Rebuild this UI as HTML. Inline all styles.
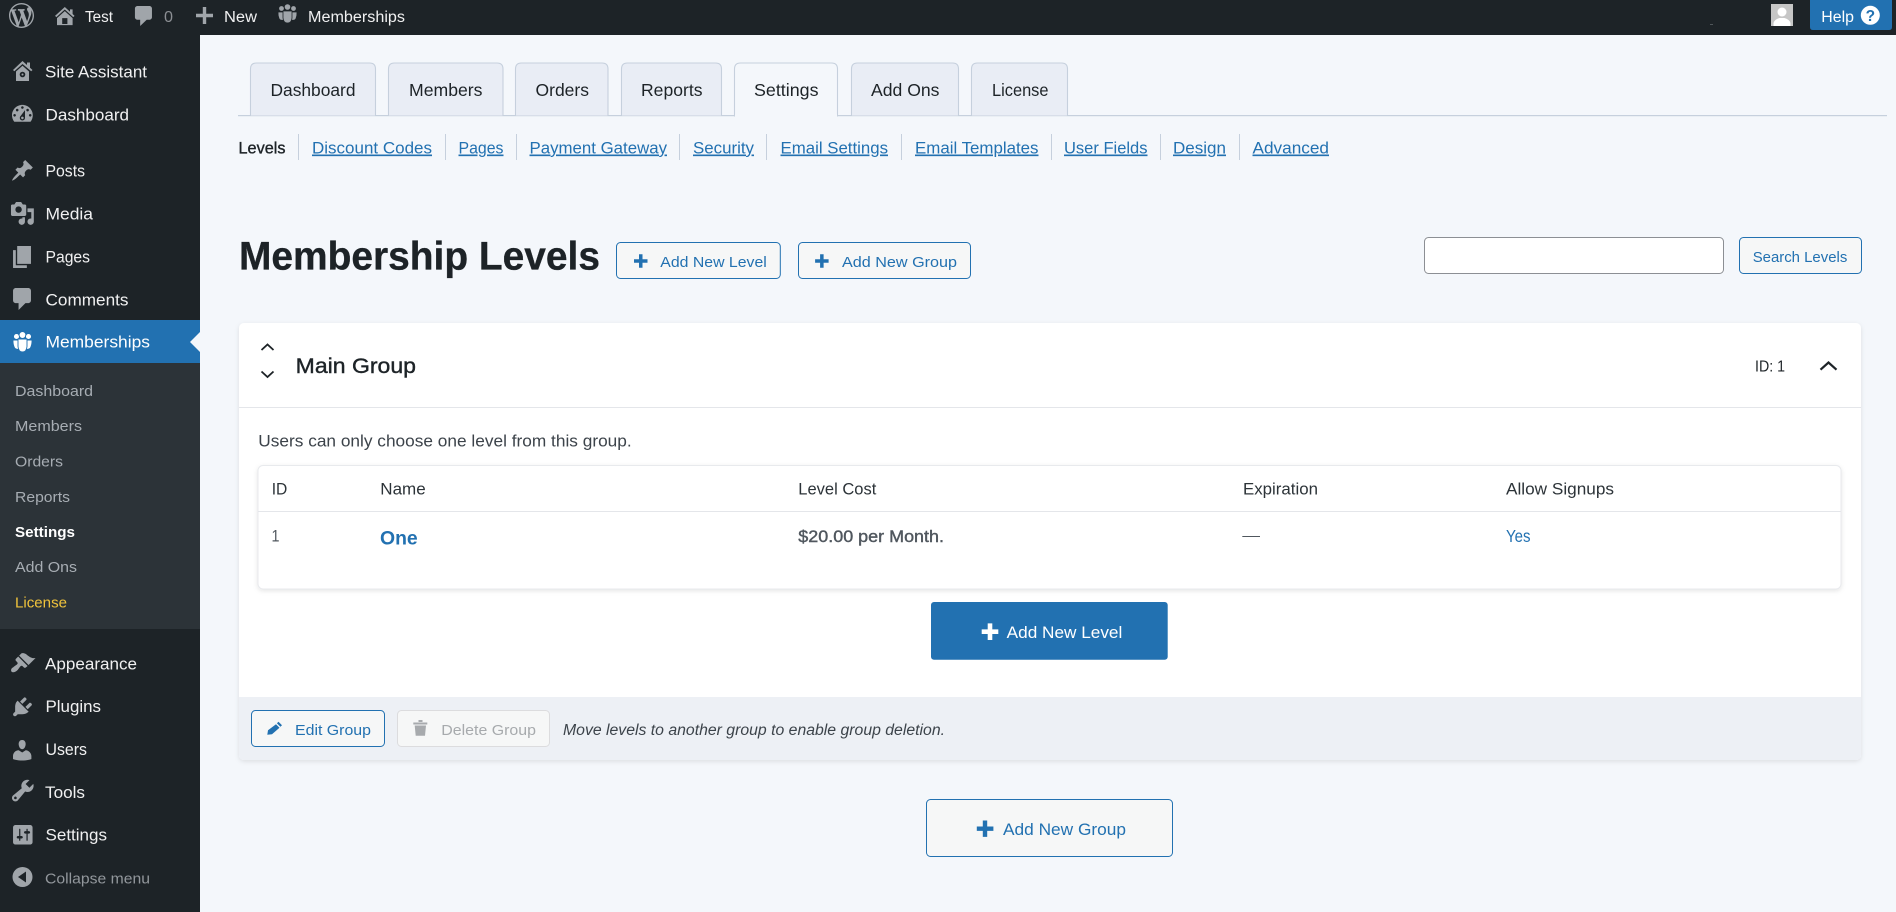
<!DOCTYPE html>
<html lang="en">
<head>
<meta charset="utf-8">
<title>Membership Levels</title>
<style>
html,body{margin:0;padding:0;width:1896px;height:912px;overflow:hidden;background:#f4f7fb}
svg{display:block;position:absolute;left:0;top:0}
text{font-family:"Liberation Sans",Arial,sans-serif}
.bar{font-size:15.5px;fill:#f0f0f1}
.nav{font-size:17px;fill:#f0f0f1}
.sub{font-size:15px;fill:#a7adb3}
.tab{font-size:17.5px;fill:#1d2327}
.lnk{font-size:16.5px;fill:#2271b1;text-decoration:underline}
.btn{font-size:15px;fill:#2271b1}
.th{font-size:16.5px;fill:#2c3338}
.ic{fill:#a0a5aa}
</style>
</head>
<body>
<svg width="1896" height="912" viewBox="0 0 1896 912" xmlns="http://www.w3.org/2000/svg">
<defs>
<filter id="sh" x="-5%" y="-5%" width="110%" height="110%"><feDropShadow dx="0" dy="1.5" stdDeviation="2.5" flood-color="#000" flood-opacity=".1"/></filter>
</defs>

<!-- page -->
<rect width="1896" height="912" fill="#f4f7fb"/>

<!-- admin bar -->
<rect width="1896" height="35" fill="#1d2327"/>
<path class="ic" transform="translate(9,3) scale(1.25)" d="M20 10c0-5.51-4.49-10-10-10C4.48 0 0 4.49 0 10c0 5.52 4.48 10 10 10 5.51 0 10-4.48 10-10zM7.780 15.370L4.370 6.220c.55-.02 1.170-.08 1.170-.08.5-.06.44-1.130-.06-1.110 0 0-1.450.11-2.370.11-.18 0-.37 0-.58-.01C4.120 2.690 6.870 1.110 10 1.110c2.330 0 4.450.87 6.050 2.340-.68-.11-1.650.39-1.650 1.580 0 .74.450 1.360.9 2.100.350.610.550 1.360.550 2.460 0 1.490-1.400 5-1.400 5l-3.030-8.370c.540-.02.820-.17.820-.17.500-.050.440-1.250-.060-1.220 0 0-1.440.120-2.380.120-.870 0-2.330-.120-2.330-.120-.500-.030-.560 1.200-.060 1.220l.920.080 1.260 3.410zM17.410 10c.240-.640.740-1.870.430-4.250.700 1.290 1.050 2.710 1.050 4.250 0 3.290-1.730 6.240-4.400 7.780.970-2.590 1.940-5.200 2.920-7.780zM6.100 18.090C3.120 16.650 1.110 13.530 1.110 10c0-1.300.230-2.480.720-3.590C3.250 10.300 4.670 14.200 6.100 18.090zm4.030-6.630l2.580 6.980c-.860.290-1.760.450-2.710.450-.790 0-1.570-.110-2.290-.330.810-2.380 1.620-4.740 2.420-7.100z"/>
<path class="ic" transform="translate(51.800,4.100) scale(1.300,1.170)" d="M16 8.500l1.530 1.530-1.060 1.060L10 4.620l-6.470 6.470-1.060-1.060L10 2.500l4 4v-2h2v4zm-6-2.460l6 5.990V18H4v-5.970zM12 17v-5H8v5h4z"/>
<text class="bar" x="85" y="22" textLength="28" lengthAdjust="spacingAndGlyphs">Test</text>
<path class="ic" transform="translate(131,3.500) scale(1.310,1.250)" d="M5 2h9c1.100 0 2 .9 2 2v7c0 1.100-.9 2-2 2h-2l-5 5v-5H5c-1.100 0-2-.9-2-2V4c0-1.100.9-2 2-2z"/>
<text class="bar" x="164" y="22" textLength="9" lengthAdjust="spacingAndGlyphs" style="fill:#8c8f94">0</text>
<path class="ic" d="M202.800 7h3.400v6.800H213v3.400h-6.800V24h-3.400v-6.800H196v-3.400h6.800z"/>
<text class="bar" x="224" y="22" textLength="33" lengthAdjust="spacingAndGlyphs">New</text>
<g class="ic" stroke="#1d2327" stroke-width=".8">
  <circle cx="281.500" cy="8.500" r="2.800"/><circle cx="287.500" cy="7" r="3.200"/><circle cx="293.500" cy="8.500" r="2.800"/>
  <path d="M278 12h5.500v8q-3.500 1-4.500-1.500q-1.200-3-1-6.500zM291.500 12h5.500q.2 3.500-1 6.500q-1 2.500-4.500 1.500z"/>
  <path d="M283 11h9v7q-.5 5-4.500 5t-4.500-5z"/>
</g>
<text class="bar" x="308" y="22" textLength="97" lengthAdjust="spacingAndGlyphs">Memberships</text>

<rect x="1710" y="24" width="3" height="1" fill="#50565a"/>
<rect x="1771" y="4" width="22" height="22" fill="#c6c6c6"/>
<circle cx="1782" cy="12" r="4.500" fill="#fff"/>
<path fill="#fff" d="M1773.500 26v-3q1-3.500 6-5h5q5 1.500 6 5v3z"/>
<path fill="#2271b1" d="M1810 0h82v27q0 3-3 3h-76q-3 0-3-3z"/>
<text class="bar" x="1821.300" y="22" textLength="32.700" lengthAdjust="spacingAndGlyphs" style="fill:#fff">Help</text>
<circle cx="1870.300" cy="15.300" r="9.500" fill="#fff"/>
<text x="1870.300" y="21" text-anchor="middle" style="font-size:15.500px;font-weight:bold;fill:#2271b1">?</text>

<!-- sidebar -->
<rect y="35" width="200" height="877" fill="#1d2327"/>
<rect y="363" width="200" height="266" fill="#2c3338"/>
<rect y="320" width="200" height="43" fill="#2271b1"/>
<path d="M200 332v20l-10-10z" fill="#f4f7fb"/>

<!-- icons: top -->
<path class="ic" d="M22.500 61l4.500 4v-2.500h3v5.200l2.500 2.300-1.300 1.300L22.500 64 14.300 71.300 13 70zM16 71.500l6.500-5.800 6.500 5.800V81H16z"/>
<circle cx="22.500" cy="74.500" r="2.800" fill="#1d2327"/><circle cx="22.500" cy="74.500" r="1" class="ic"/>
<path class="ic" transform="translate(9.400,101) scale(1.300)" d="M3.760 16h12.480c1.100-1.370 1.760-3.110 1.760-5 0-4.420-3.580-8-8-8s-8 3.580-8 8c0 1.890.66 3.630 1.760 5zM10 4c.55 0 1 .45 1 1s-.45 1-1 1-1-.45-1-1 .45-1 1-1zM6 6c.55 0 1 .45 1 1s-.45 1-1 1-1-.45-1-1 .45-1 1-1zm8 0c.55 0 1 .45 1 1s-.45 1-1 1-1-.45-1-1 .45-1 1-1zm-5.370 5.550L12 7v6c0 1.100-.9 2-2 2s-2-.9-2-2c0-.57.24-1.080.63-1.450zM4 10c.55 0 1 .45 1 1s-.45 1-1 1-1-.45-1-1 .45-1 1-1zm12 0c.55 0 1 .45 1 1s-.45 1-1 1-1-.45-1-1 .45-1 1-1zm-5 3c0-.55-.45-1-1-1s-1 .45-1 1 .45 1 1 1 1-.45 1-1z"/>
<path class="ic" transform="translate(10.500,158.500) scale(1.200)" d="M10.440 3.020l1.820-1.820 6.360 6.350-1.830 1.820c-1.050-.68-2.480-.57-3.410.36l-.75.75c-.92.93-1.040 2.350-.35 3.410l-1.830 1.820-2.410-2.410-2.800 2.790c-.42.42-3.380 2.710-3.800 2.290s1.860-3.390 2.280-3.810l2.790-2.790L4.100 9.360l1.830-1.820c1.050.69 2.480.57 3.400-.36l.75-.75c.93-.92 1.050-2.350.36-3.410z"/>
<path class="ic" transform="translate(9.700,200.700) scale(1.270)" d="M13 11V4c0-.55-.45-1-1-1h-1.670L9 1H5L3.670 3H2c-.55 0-1 .45-1 1v7c0 .55.45 1 1 1h10c.55 0 1-.45 1-1zM7 4.500c1.380 0 2.500 1.120 2.500 2.500S8.380 9.500 7 9.500 4.500 8.380 4.500 7 5.620 4.500 7 4.500zM14 6h5v10.500c0 1.380-1.120 2.500-2.500 2.500S14 17.880 14 16.500s1.120-2.500 2.500-2.500c.17 0 .34.02.5.05V9h-3V6zm-4 8.050V13h2v3.500c0 1.380-1.120 2.500-2.500 2.500S7 17.880 7 16.500 8.120 14 9.500 14c.17 0 .34.02.5.05z"/>
<path class="ic" transform="translate(8.900,243.200) scale(1.380)" d="M6 15V2h10v13H6zm-1 1h8v2H3V5h2v11z"/>
<path class="ic" transform="translate(8.900,285.200) scale(1.380)" d="M5 2h9c1.100 0 2 .9 2 2v7c0 1.100-.9 2-2 2h-2l-5 5v-5H5c-1.100 0-2-.9-2-2V4c0-1.100.9-2 2-2z"/>
<g fill="#fff" stroke="#2271b1" stroke-width=".9">
  <circle cx="16.500" cy="336.500" r="3"/><circle cx="22.500" cy="335" r="3.400"/><circle cx="28.500" cy="336.500" r="3"/>
  <path d="M13 340h6v9q-3.500 1-4.700-1.500q-1.500-3.500-1.300-7.500zM26 340h6q.2 4-1.300 7.500q-1.200 2.500-4.700 1.500z"/>
  <path d="M18 339h9v7.500q-.5 5.500-4.500 5.500t-4.500-5.500z"/>
</g>

<text class="nav" x="45" y="77.500" textLength="102" lengthAdjust="spacingAndGlyphs">Site Assistant</text>
<text class="nav" x="45.500" y="120.500" textLength="83.500" lengthAdjust="spacingAndGlyphs">Dashboard</text>
<text class="nav" x="45.500" y="176.500" textLength="39.500" lengthAdjust="spacingAndGlyphs">Posts</text>
<text class="nav" x="45.500" y="219.500" textLength="47.500" lengthAdjust="spacingAndGlyphs">Media</text>
<text class="nav" x="45.500" y="262.500" textLength="44.500" lengthAdjust="spacingAndGlyphs">Pages</text>
<text class="nav" x="45.500" y="305.500" textLength="83" lengthAdjust="spacingAndGlyphs">Comments</text>
<text class="nav" x="45.500" y="347.500" textLength="104.500" lengthAdjust="spacingAndGlyphs" style="fill:#fff">Memberships</text>

<text class="sub" x="15" y="396" textLength="78" lengthAdjust="spacingAndGlyphs">Dashboard</text>
<text class="sub" x="15" y="431" textLength="67" lengthAdjust="spacingAndGlyphs">Members</text>
<text class="sub" x="15" y="466.500" textLength="48" lengthAdjust="spacingAndGlyphs">Orders</text>
<text class="sub" x="15" y="502" textLength="55" lengthAdjust="spacingAndGlyphs">Reports</text>
<text class="sub" x="15" y="537" textLength="60" lengthAdjust="spacingAndGlyphs" style="fill:#fff;font-weight:bold">Settings</text>
<text class="sub" x="15" y="572" textLength="62" lengthAdjust="spacingAndGlyphs">Add Ons</text>
<text class="sub" x="15" y="607.500" textLength="52" lengthAdjust="spacingAndGlyphs" style="fill:#f0c33c">License</text>

<!-- icons: bottom -->
<path class="ic" transform="translate(9.300,650.300) scale(1.330)" d="M14.480 11.060L7.410 3.990l1.500-1.500c.5-.56 2.300-.47 3.510.32 1.210.8 1.430 1.280 2.910 2.100 1.180.64 2.450 1.260 4.450.85zm-.71.71L6.700 4.700 4.930 6.470c-.39.39-.39 1.020 0 1.410l1.060 1.060c.39.39.39 1.030 0 1.420-.6.6-1.430 1.110-2.210 1.690-.35.26-.7.53-1.010.84C1.430 13.230.91 15.240 1.760 16.120c.87.87 2.880.35 4.230-1 .31-.31.58-.66.85-1.020.57-.78 1.080-1.610 1.690-2.210.39-.39 1.020-.39 1.410 0l1.060 1.060c.39.39 1.020.39 1.410 0z"/>
<path class="ic" transform="translate(10.200,694.500) scale(1.230)" d="M13.110 4.360L9.870 7.600 8 5.730l3.240-3.240c.35-.34 1.050-.2 1.560.32.52.51.66 1.210.31 1.550zm-8 1.770l.91-1.120 9.010 9.010-1.190.84c-.71.71-2.630 1.160-3.820 1.160H6.140L4.900 17.260c-.59.59-1.540.59-2.120 0-.59-.58-.59-1.530 0-2.120l1.240-1.240v-3.880c0-1.130.4-3.190 1.090-3.890zm7.260 3.970l3.240-3.240c.34-.35 1.040-.21 1.550.31.52.51.66 1.210.31 1.550l-3.240 3.250z"/>
<path class="ic" transform="translate(9.500,737.500) scale(1.270)" d="M10 9.250c-2.270 0-2.730-3.440-2.730-3.440C7 4.020 7.820 2 9.970 2c2.160 0 2.980 2.020 2.710 3.810 0 0-.41 3.440-2.680 3.440zm0 2.570L12.720 10c2.390 0 4.520 2.330 4.520 4.530v2.490s-3.650 1.130-7.240 1.130c-3.650 0-7.240-1.130-7.240-1.130v-2.490c0-2.250 1.940-4.480 4.470-4.480z"/>
<path class="ic" transform="translate(9.300,777) scale(1.350)" d="M16.680 9.770c-1.340 1.340-3.300 1.670-4.950.99l-5.410 6.520c-.99.99-2.590.99-3.580 0s-.99-2.590 0-3.570l6.520-5.420c-.68-1.650-.35-3.610.99-4.950 1.280-1.280 3.120-1.620 4.720-1.060l-2.890 2.890 2.820 2.820 2.860-2.870c.53 1.580.18 3.390-1.080 4.650zM3.810 16.210c.4.39 1.040.39 1.430 0 .4-.4.4-1.040 0-1.430-.39-.4-1.030-.4-1.430 0-.39.39-.39 1.030 0 1.430z"/>
<path class="ic" transform="translate(10.600,822.600) scale(1.220)" fill-rule="evenodd" d="M18 16V4c0-1.100-.9-2-2-2H4c-1.100 0-2 .9-2 2v12c0 1.100.9 2 2 2h12c1.100 0 2-.9 2-2zM8 11h1c.55 0 1 .45 1 1s-.45 1-1 1H8v1.500c0 .28-.22.5-.5.5s-.5-.22-.5-.5V13H6c-.55 0-1-.45-1-1s.45-1 1-1h1V5.500c0-.28.22-.5.5-.5s.5.22.5.5V11zm5-2h-1c-.55 0-1-.45-1-1s.45-1 1-1h1V5.500c0-.28.22-.5.5-.5s.5.22.5.5V7h1c.55 0 1 .45 1 1s-.45 1-1 1h-1v5.500c0 .28-.22.5-.5.5s-.5-.22-.5-.5V9z"/>
<circle cx="22.500" cy="877" r="10" class="ic"/>
<path d="M26 871.500v11l-8-5.500z" fill="#1d2327"/>

<text class="nav" x="45" y="669.500" textLength="92" lengthAdjust="spacingAndGlyphs">Appearance</text>
<text class="nav" x="45.500" y="712" textLength="55.500" lengthAdjust="spacingAndGlyphs">Plugins</text>
<text class="nav" x="45.500" y="755" textLength="41.500" lengthAdjust="spacingAndGlyphs">Users</text>
<text class="nav" x="45" y="798" textLength="40" lengthAdjust="spacingAndGlyphs">Tools</text>
<text class="nav" x="45.500" y="840.500" textLength="61.500" lengthAdjust="spacingAndGlyphs">Settings</text>
<text class="sub" x="45" y="883.500" textLength="105" lengthAdjust="spacingAndGlyphs" style="fill:#92979c">Collapse menu</text>

<!-- tabs -->
<rect x="238" y="115" width="1649" height="1.200" fill="#c6d0dd"/>
<g fill="#e9edf5" stroke="#c6d0dd" stroke-width="1.100">
  <path d="M250.500 115.500V69q0-6 6-6h113q6 0 6 6v46.500"/>
  <path d="M388.500 115.500V69q0-6 6-6h102.500q6 0 6 6v46.500"/>
  <path d="M515.500 115.500V69q0-6 6-6h80.500q6 0 6 6v46.500"/>
  <path d="M621.500 115.500V69q0-6 6-6h88q6 0 6 6v46.500"/>
  <path d="M734.500 116.500V69q0-6 6-6h91q6 0 6 6v47.500" fill="#f4f7fb"/>
  <path d="M851.500 115.500V69q0-6 6-6h95q6 0 6 6v46.500"/>
  <path d="M971.500 115.500V69q0-6 6-6h84q6 0 6 6v46.500"/>
</g>
<rect x="735" y="114" width="102" height="3" fill="#f4f7fb"/>
<text class="tab" x="270.500" y="95.800" textLength="85" lengthAdjust="spacingAndGlyphs">Dashboard</text>
<text class="tab" x="409" y="95.800" textLength="73.500" lengthAdjust="spacingAndGlyphs">Members</text>
<text class="tab" x="535.500" y="95.800" textLength="53.500" lengthAdjust="spacingAndGlyphs">Orders</text>
<text class="tab" x="641" y="95.800" textLength="61.500" lengthAdjust="spacingAndGlyphs">Reports</text>
<text class="tab" x="754" y="95.800" textLength="64.500" lengthAdjust="spacingAndGlyphs">Settings</text>
<text class="tab" x="871" y="95.800" textLength="68.500" lengthAdjust="spacingAndGlyphs">Add Ons</text>
<text class="tab" x="992" y="95.800" textLength="56.500" lengthAdjust="spacingAndGlyphs">License</text>

<!-- sub nav -->
<g fill="#c6d0dd">
  <rect x="298" y="134" width="1" height="26"/><rect x="445" y="134" width="1" height="26"/>
  <rect x="516" y="134" width="1" height="26"/><rect x="679" y="134" width="1" height="26"/>
  <rect x="766" y="134" width="1" height="26"/><rect x="901" y="134" width="1" height="26"/>
  <rect x="1051" y="134" width="1" height="26"/><rect x="1160" y="134" width="1" height="26"/>
  <rect x="1239" y="134" width="1" height="26"/>
</g>
<text class="tab" x="238.500" y="153.500" textLength="47" lengthAdjust="spacingAndGlyphs" style="font-size:16.500px;stroke:#1d2327;stroke-width:.35">Levels</text>
<text class="lnk" x="312" y="153.500" textLength="120" lengthAdjust="spacingAndGlyphs">Discount Codes</text>
<text class="lnk" x="458.500" y="153.500" textLength="45" lengthAdjust="spacingAndGlyphs">Pages</text>
<text class="lnk" x="529.500" y="153.500" textLength="137.500" lengthAdjust="spacingAndGlyphs">Payment Gateway</text>
<text class="lnk" x="693" y="153.500" textLength="61" lengthAdjust="spacingAndGlyphs">Security</text>
<text class="lnk" x="780.500" y="153.500" textLength="107.500" lengthAdjust="spacingAndGlyphs">Email Settings</text>
<text class="lnk" x="915" y="153.500" textLength="123.500" lengthAdjust="spacingAndGlyphs">Email Templates</text>
<text class="lnk" x="1064" y="153.500" textLength="83.500" lengthAdjust="spacingAndGlyphs">User Fields</text>
<text class="lnk" x="1173" y="153.500" textLength="53" lengthAdjust="spacingAndGlyphs">Design</text>
<text class="lnk" x="1252.500" y="153.500" textLength="76.500" lengthAdjust="spacingAndGlyphs">Advanced</text>

<!-- heading -->
<text x="239" y="269.500" textLength="361" lengthAdjust="spacingAndGlyphs" style="font-size:40px;font-weight:bold;fill:#1d2327;stroke:#1d2327;stroke-width:.35">Membership Levels</text>

<g fill="#f6f7f7" stroke="#2271b1" stroke-width="1">
  <rect x="616.500" y="242.500" width="163.800" height="36" rx="4"/>
  <rect x="798.500" y="242.500" width="172" height="36" rx="4"/>
  <rect x="1739.500" y="237.500" width="122" height="36" rx="4"/>
</g>
<rect x="1424.500" y="237.500" width="299" height="36" rx="4" fill="#fff" stroke="#8c8f94" stroke-width="1"/>
<path fill="#2271b1" d="M639 254.300h3.500v5h5v3.500h-5v5H639v-5h-5v-3.500h5z"/>
<text class="btn" x="660.300" y="267" textLength="106.500" lengthAdjust="spacingAndGlyphs">Add New Level</text>
<path fill="#2271b1" d="M820.100 254.300h3.500v5h5v3.500h-5v5h-3.500v-5h-5v-3.500h5z"/>
<text class="btn" x="842" y="267" textLength="115" lengthAdjust="spacingAndGlyphs">Add New Group</text>
<text class="btn" x="1752.700" y="262" textLength="94.600" lengthAdjust="spacingAndGlyphs">Search Levels</text>

<!-- card -->
<rect x="239" y="323" width="1622" height="437" rx="5" fill="#fff" filter="url(#sh)"/>
<rect x="239" y="407" width="1622" height="1" fill="#e4e6ea"/>
<path d="M239 697h1622v58q0 5-5 5H244q-5 0-5-5z" fill="#edf0f5"/>

<path d="M261.500 350l6-5.500 6 5.500M261.500 371.500l6 5.500 6-5.500" fill="none" stroke="#1d2327" stroke-width="1.800"/>
<text x="295.700" y="373" textLength="120.300" lengthAdjust="spacingAndGlyphs" style="font-size:21.500px;fill:#1d2327;stroke:#1d2327;stroke-width:.4">Main Group</text>
<text x="1755" y="371.500" textLength="30" lengthAdjust="spacingAndGlyphs" style="font-size:15.500px;fill:#1d2327">ID: 1</text>
<path d="M1820.500 369.700l8-7.200 8 7.200" fill="none" stroke="#1d2327" stroke-width="2.200"/>

<text x="258.300" y="446.500" textLength="373.400" lengthAdjust="spacingAndGlyphs" style="font-size:17px;fill:#3c434a">Users can only choose one level from this group.</text>

<!-- table -->
<rect x="258" y="465.500" width="1583" height="123.500" rx="5" fill="#fff" stroke="#e8eaed" filter="url(#sh)"/>
<rect x="258" y="511" width="1583" height="1" fill="#e4e6ea"/>
<text class="th" x="271.700" y="494.700" textLength="15.600" lengthAdjust="spacingAndGlyphs">ID</text>
<text class="th" x="380.300" y="494.700" textLength="45.400" lengthAdjust="spacingAndGlyphs">Name</text>
<text class="th" x="798.300" y="494.700" textLength="78" lengthAdjust="spacingAndGlyphs">Level Cost</text>
<text class="th" x="1243" y="494.700" textLength="75" lengthAdjust="spacingAndGlyphs">Expiration</text>
<text class="th" x="1506" y="494.700" textLength="108" lengthAdjust="spacingAndGlyphs">Allow Signups</text>
<text class="th" x="271.500" y="541.700" textLength="8" lengthAdjust="spacingAndGlyphs" style="fill:#50575e">1</text>
<text x="380" y="544.500" textLength="37.700" lengthAdjust="spacingAndGlyphs" style="font-size:19px;font-weight:bold;fill:#2271b1">One</text>
<text class="th" x="798.300" y="542" textLength="145.700" lengthAdjust="spacingAndGlyphs" style="fill:#50575e;stroke:#50575e;stroke-width:.4">$20.00 per Month.</text>
<rect x="1242.300" y="536" width="17.700" height="1" fill="#50575e"/>
<text class="th" x="1506" y="542" textLength="24.500" lengthAdjust="spacingAndGlyphs" style="font-size:17.500px;fill:#2271b1">Yes</text>

<!-- primary add level -->
<rect x="931" y="602" width="236.700" height="57.700" rx="3" fill="#2271b1"/>
<path fill="#fff" d="M987.700 623.400h4.600v6h6v4.600h-6v6h-4.600v-6h-6v-4.600h6z"/>
<text x="1006.700" y="638" textLength="115.600" lengthAdjust="spacingAndGlyphs" style="font-size:17px;fill:#fff">Add New Level</text>

<!-- footer -->
<rect x="251.500" y="710.500" width="133" height="36" rx="4" fill="#f6f7f7" stroke="#2271b1" stroke-width="1"/>
<rect x="397.500" y="710.500" width="152" height="36" rx="4" fill="#f6f7f7" stroke="#dcdcde" stroke-width="1"/>
<path fill="#2271b1" d="M278.500 721.700l3.500 3.500-1.600 1.600-3.500-3.500zM276 724.200l3.500 3.500-7.500 6.500-4.700.6.700-4.600z"/>
<text class="btn" x="295" y="735" textLength="76" lengthAdjust="spacingAndGlyphs">Edit Group</text>
<path fill="#a7aaad" d="M413.300 722.500h14v2h-14zM418.500 720h4v2h-4zM414.700 725.500h11.300l-1 10.200h-9.300z"/>
<text class="btn" x="441.300" y="735" textLength="94.700" lengthAdjust="spacingAndGlyphs" style="fill:#a7aaad">Delete Group</text>
<text x="563" y="735" textLength="382" lengthAdjust="spacingAndGlyphs" style="font-size:15.500px;font-style:italic;fill:#3c434a">Move levels to another group to enable group deletion.</text>

<!-- add group -->
<rect x="926.500" y="799.500" width="246" height="57" rx="4" fill="#f6f7f7" stroke="#2271b1" stroke-width="1"/>
<path fill="#2271b1" d="M982.800 820.500h4.400v6h6.200v4.400h-6.200v6h-4.400v-6h-6v-4.400h6z"/>
<text x="1003" y="835" textLength="123" lengthAdjust="spacingAndGlyphs" style="font-size:17px;fill:#2271b1">Add New Group</text>
</svg>
</body>
</html>
